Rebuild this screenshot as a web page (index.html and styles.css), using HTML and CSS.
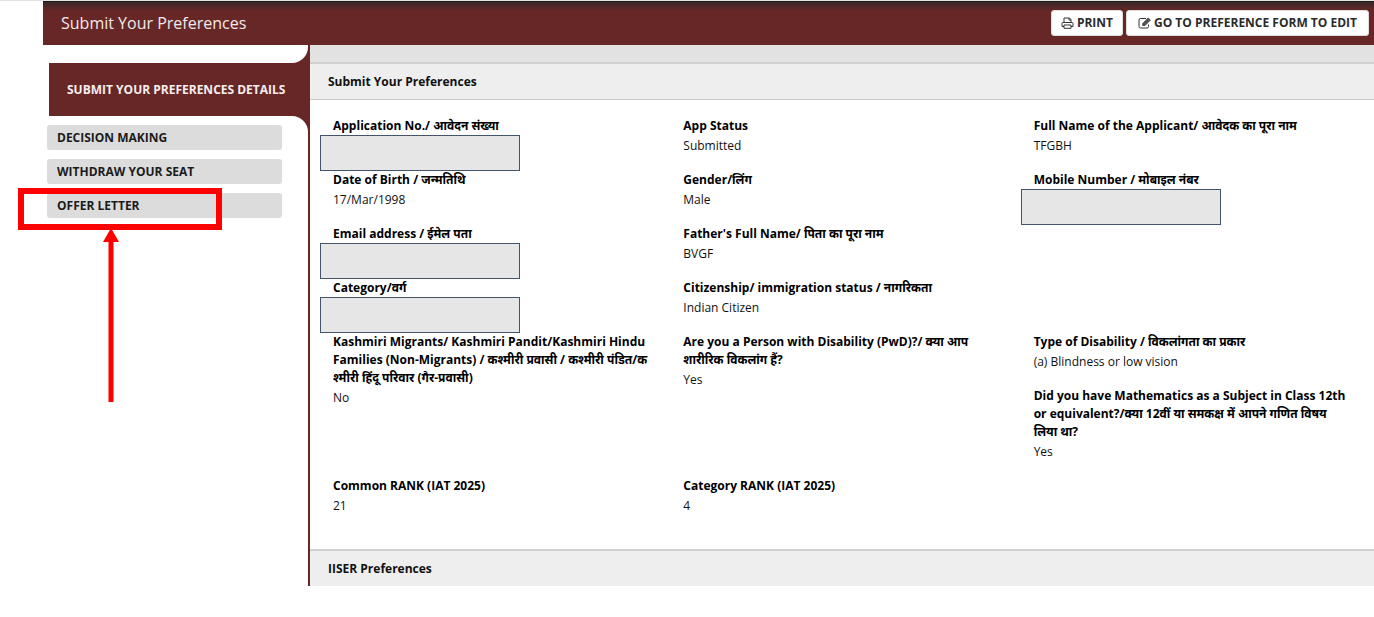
FILE: index.html
```
<!DOCTYPE html>
<html lang="en">

<head>
    <meta charset="UTF-8">
    <meta name="viewport" content="width=device-width, initial-scale=1.0">
    <title>Submit Your Preferences</title>
    <link rel="stylesheet" href="styles.css">
</head>

<body>
    <div class="page">
        <header class="topbar">
            <h1>Submit Your Preferences</h1>
            <div class="actions">
                <button type="button" class="btn">
                    <svg class="icon" viewBox="0 0 13 12" aria-hidden="true">
                        <path d="M3 5V1h5.500L10 2.500V5M8 1v2h2M3 9.500H1V6.500Q1 5.500 2 5.500h9Q12 5.500 12 6.500v3h-2M3 8h7v3.300H3zM3 5.500h7" />
                    </svg>
                    PRINT
                </button>
                <button type="button" class="btn btn-edit">
                    <svg class="icon" viewBox="0 0 13 12" aria-hidden="true">
                        <path d="M8 1.500H2.500Q1 1.500 1 3v6.500Q1 11 2.500 11h6.500q1.500 0 1.500-1.500V7.500" />
                        <path class="pencil" d="M4.800 6.500L10.200 1l2.100 2.100L7 8.500H4.800z" />
                    </svg>GO TO PREFERENCE FORM TO EDIT
                </button>
            </div>
        </header>

        <div class="layout">
            <aside class="sidebar">
                <div class="sidebar-top"></div>
                <h2 class="sidebar-title">SUBMIT YOUR PREFERENCES DETAILS</h2>
                <nav class="sidebar-nav">
                    <a href="#decision">DECISION MAKING</a>
                    <a href="#withdraw">WITHDRAW YOUR SEAT</a>
                    <a href="#offer">OFFER LETTER</a>
                </nav>
            </aside>

            <main class="content">
                <div class="strip"></div>
                <h2 class="panel-head">Submit Your Preferences</h2>
                <dl class="details">
                    <div class="field">
                        <dt>Application No./ आवेदन संख्या</dt>
                        <dd class="masked"></dd>
                    </div>
                    <div class="field">
                        <dt>App Status</dt>
                        <dd>Submitted</dd>
                    </div>
                    <div class="field">
                        <dt>Full Name of the Applicant/ आवेदक का पूरा नाम</dt>
                        <dd>TFGBH</dd>
                    </div>

                    <div class="field">
                        <dt>Date of Birth / जन्मतिथि</dt>
                        <dd>17/Mar/1998</dd>
                    </div>
                    <div class="field">
                        <dt>Gender/लिंग</dt>
                        <dd>Male</dd>
                    </div>
                    <div class="field">
                        <dt>Mobile Number / मोबाइल नंबर</dt>
                        <dd class="masked"></dd>
                    </div>

                    <div class="field">
                        <dt>Email address / ईमेल पता</dt>
                        <dd class="masked"></dd>
                    </div>
                    <div class="field start-second">
                        <dt>Father's Full Name/ पिता का पूरा नाम</dt>
                        <dd>BVGF</dd>
                    </div>

                    <div class="field start-first">
                        <dt>Category/वर्ग</dt>
                        <dd class="masked"></dd>
                    </div>
                    <div class="field">
                        <dt>Citizenship/ immigration status / नागरिकता</dt>
                        <dd>Indian Citizen</dd>
                    </div>

                    <div class="field start-first tall">
                        <dt>Kashmiri Migrants/ Kashmiri Pandit/Kashmiri Hindu Families (Non-Migrants) / कश्मीरी प्रवासी / कश्मीरी पंडित/क<br>श्मीरी हिंदू परिवार (गैर-प्रवासी)</dt>
                        <dd>No</dd>
                    </div>
                    <div class="field tall">
                        <dt>Are you a Person with Disability (PwD)?/ क्या आप शारीरिक विकलांग हैं?</dt>
                        <dd>Yes</dd>
                    </div>
                    <div class="field">
                        <dt>Type of Disability / विकलांगता का प्रकार</dt>
                        <dd>(a) Blindness or low vision</dd>
                    </div>
                    <div class="field start-third">
                        <dt>Did you have Mathematics as a Subject in Class 12th or equivalent?/क्या 12वीं या समकक्ष में आपने गणित विषय<br>लिया था?</dt>
                        <dd>Yes</dd>
                    </div>

                    <div class="field start-first">
                        <dt>Common RANK (IAT 2025)</dt>
                        <dd>21</dd>
                    </div>
                    <div class="field">
                        <dt>Category RANK (IAT 2025)</dt>
                        <dd>4</dd>
                    </div>
                </dl>
                <h2 class="panel-head">IISER Preferences</h2>
            </main>
        </div>

        <!-- Callout pointing at the offer letter link -->
        <div class="callout-box"></div>
        <svg class="callout-arrow" viewBox="0 0 16 174" aria-hidden="true">
            <path d="M8 0l8 14h-5.500v160h-5V14H0z" />
        </svg>
    </div>
</body>

</html>
```
FILE: styles.css
```
* {
    box-sizing: border-box;
}

body {
    margin: 0;
    background: #fff;
    color: #111;
    font-family: "Open Sans", "Noto Sans", "Noto Sans Devanagari", sans-serif;
    font-size: 12px;
    line-height: 18px;
}

.page {
    position: relative;
    padding-left: 43px;
    border-top: 1px solid #dfe3e1;
}

h1,
h2,
dl,
dd {
    margin: 0;
}

/* Header */
.topbar {
    display: flex;
    align-items: center;
    justify-content: space-between;
    height: 44px;
    padding: 0 5px 2px 18px;
    border-top: 1px solid #1c1c1c;
    background: linear-gradient(#3a2827, #672727 9px);
}

.topbar h1 {
    color: #f3e9e9;
    font-size: 16px;
    font-weight: 400;
    line-height: 20px;
}

.actions {
    display: flex;
    gap: 3px;
}

.btn {
    display: flex;
    align-items: center;
    gap: 3px;
    height: 26px;
    padding: 0 9px;
    border: 1px solid #ddd;
    border-radius: 3px;
    background: #fff;
    color: #2b2b2b;
    font-family: inherit;
    font-size: 12px;
    font-weight: 700;
    cursor: pointer;
}

.btn-edit {
    gap: 3px;
    padding: 0 11px;
}

.icon {
    width: 13px;
    height: 12px;
    fill: none;
    stroke: #333;
    stroke-width: 1;
}

.icon .pencil {
    fill: #555;
    stroke: #444;
}

/* Layout */
.layout {
    display: flex;
}

.sidebar {
    display: flex;
    flex-direction: column;
    flex: none;
    width: 267px;
    padding-right: 2px;
    background: #672727;
}

.sidebar-top {
    height: 18px;
    background: #fff;
    border-bottom-right-radius: 16px;
}

.sidebar-title {
    padding: 18px 0 17px 18px;
    border-left: 6px solid #fff;
    color: #f6eeee;
    font-size: 12px;
    font-weight: 700;
    white-space: nowrap;
}

.sidebar-nav {
    display: flex;
    flex: 1;
    flex-direction: column;
    gap: 9px;
    padding: 9px 26px 0 4px;
    background: #fff;
    border-top-right-radius: 16px;
}

.sidebar-nav a {
    padding: 4px 10px 3px;
    border-radius: 3px;
    background: #dcdcdc;
    color: #1b1b1b;
    font-weight: 700;
    text-decoration: none;
}

/* Content */
.content {
    flex: 1;
    min-width: 0;
}

.strip {
    height: 17px;
    background: #e2e2e2;
}

.panel-head {
    padding: 9px 18px 8px;
    border-top: 2px solid #d0d0d0;
    background: #eee;
    font-size: 12px;
    font-weight: 700;
}

.strip + .panel-head {
    border-bottom: 1px solid #ccc;
}

.details {
    display: grid;
    grid-template-columns: repeat(3, minmax(0, 1fr));
    column-gap: 24px;
    padding: 17px 14px 18px 23px;
}

.field {
    position: relative;
    padding-bottom: 14px;
}

.field dt {
    color: #000;
    font-weight: 700;
}

.field dd {
    min-height: 22px;
    padding-top: 2px;
}

/* Private values are covered */
.field .masked {
    position: absolute;
    top: 18px;
    left: -13px;
    width: 200px;
    height: 36px;
    border: 1px solid #44546a;
    background: #e7e6e6;
}

.start-first {
    grid-column: 1;
}

.start-second {
    grid-column: 2;
}

.start-third {
    grid-column: 3;
}

.tall {
    grid-row: span 2;
}

.callout-box {
    position: absolute;
    top: 187px;
    left: 18px;
    width: 204px;
    height: 42px;
    border: 6px solid #f00;
}

.callout-arrow {
    position: absolute;
    top: 227px;
    left: 103px;
    width: 16px;
    height: 174px;
    fill: #f00;
}
```
